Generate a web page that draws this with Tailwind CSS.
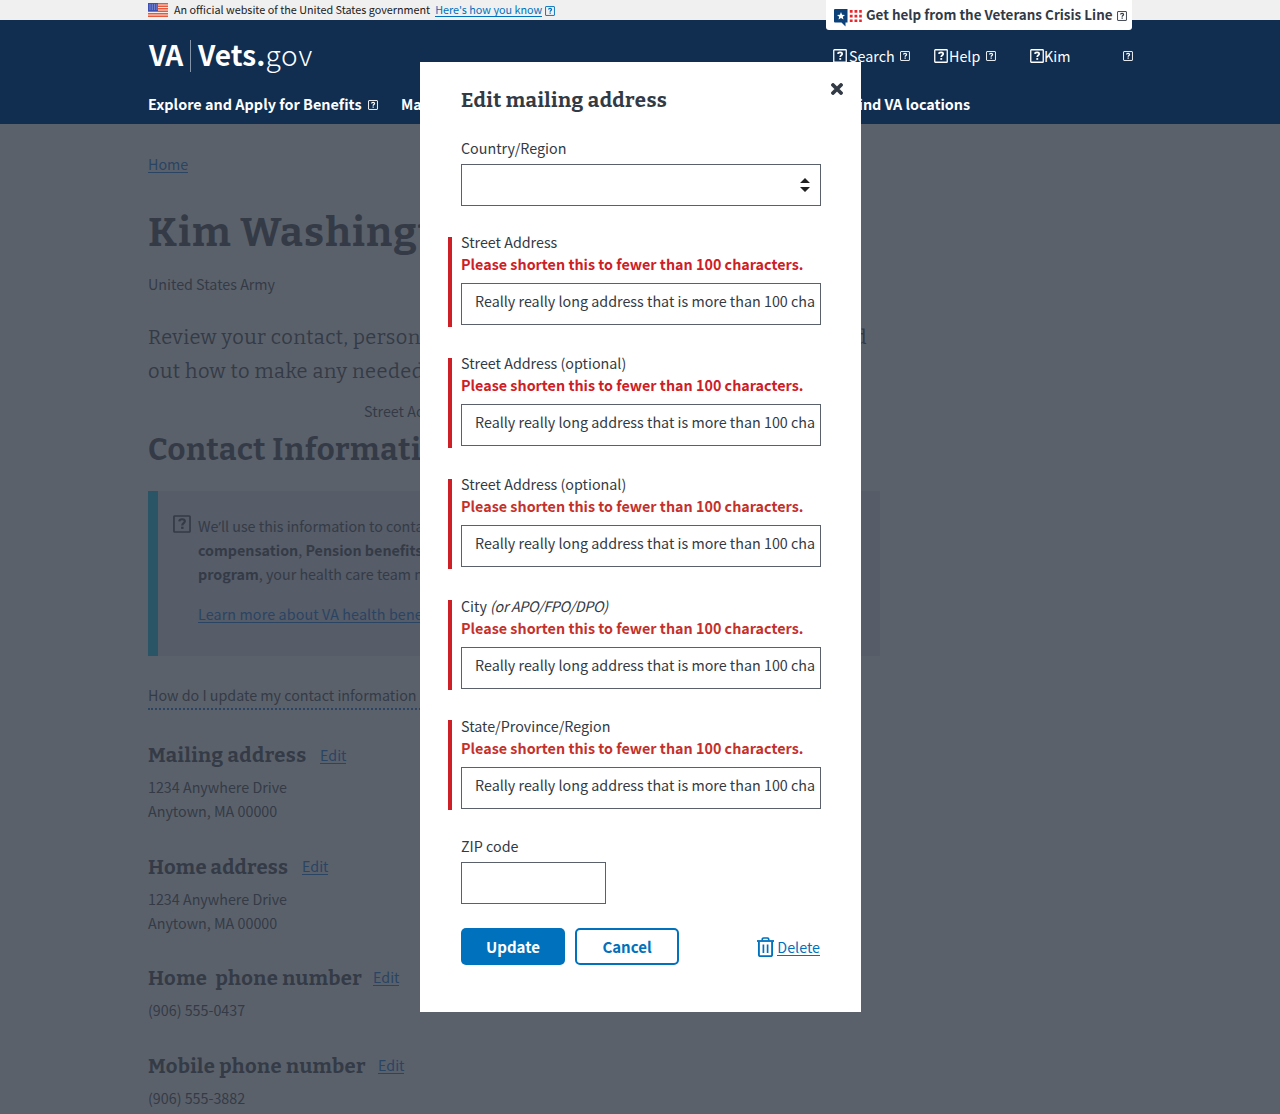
<!DOCTYPE html>
<html lang="en">
<head>
<meta charset="utf-8">
<title>Edit mailing address | Vets.gov</title>
<script src="https://cdn.jsdelivr.net/npm/@tailwindcss/browser@4"></script>
</head>
<body class="relative h-[1114px] overflow-hidden bg-[#5b616b] font-['Noto_Sans_CJK_SC','Open_Sans',sans-serif] text-[14.3px] leading-6 text-[#343b46]">
<svg class="hidden">
  <symbol id="q" viewBox="0 0 14 14"><rect x=".75" y=".75" width="12.5" height="12.5" rx=".6" fill="none" stroke="currentColor" stroke-width="1.3"/><path d="M4.900 4.900C5 3.800 6 3.300 7.100 3.300c1.300 0 2.100.6 2.100 1.600 0 1.400-2 1.400-2 3.200" fill="none" stroke="currentColor" stroke-width="1.700"/><rect x="6.300" y="9.100" width="1.900" height="1.700" fill="currentColor"/></symbol>
</svg>

<!-- Government banner -->
<div class="h-5 bg-[#f0f0f0]">
  <div class="mx-auto flex h-5 w-[984px] items-center text-[10.8px] leading-[18px] text-[#212121]">
    <svg class="mr-1.5 h-3.5 w-5" viewBox="0 0 20 14"><rect width="20" height="14" fill="#fbe9e4"/><path d="M0 .75h20M0 3.250h20M0 5.750h20M0 8.250h20M0 10.750h20M0 13.250h20" stroke="#e35a3e" stroke-width="1.300"/><rect width="10" height="8" fill="#3c50b5"/><path d="M1.500 2h8M1.500 4h8M1.500 6h8" stroke="#c5cbee" stroke-width=".9" stroke-dasharray="1 1.300"/></svg>
    <span class="-mt-0.5">An official website of the United States government</span>
    <a class="-mt-0.5 ml-[5px] h-4 border-b border-[#0071bc] leading-4 text-[#0071bc]">Here's how you know</a>
    <svg class="mt-0.5 ml-[3px] size-[10px] text-[#0071bc]"><use href="#q"/></svg>
  </div>
</div>

<!-- Site header -->
<header class="h-[104px] bg-[#112e51] text-white">
  <div class="mx-auto w-[984px]">
    <div class="flex h-[72px] items-start justify-between pt-5">
      <div class="flex h-8 items-center text-[28px] leading-8">
        <span class="-mt-[5px] ml-px w-[34px] font-bold tracking-[-0.5px]">VA</span>
        <span class="mx-[7px] h-8 w-px bg-[#8494a8]"></span>
        <span class="-mt-[5px] font-bold tracking-[0.05px]">Vets.</span><span class="-mt-[5px] font-light tracking-[0.8px]">gov</span>
      </div>
      <div class="flex h-8 items-center">
        <svg class="mr-0.5 size-3.5"><use href="#q"/></svg><span class="-mt-px w-[46px]">Search</span><svg class="ml-[5px] size-2.5"><use href="#q"/></svg>
        <svg class="mr-px ml-6 size-3.5"><use href="#q"/></svg><span class="-mt-px w-8">Help</span><svg class="ml-[5px] size-2.5"><use href="#q"/></svg>
        <svg class="ml-[34px] size-3.5"><use href="#q"/></svg><span class="-mt-px w-[79px]">Kim</span><svg class="-mr-px size-2.5"><use href="#q"/></svg>
      </div>
    </div>
    <nav class="flex h-6 items-center text-[14.4px] font-bold whitespace-nowrap">
      <span class="w-[214px] tracking-[0.02px]">Explore and Apply for Benefits</span>
      <svg class="mt-0.5 ml-[6px] size-2.5"><use href="#q"/></svg>
      <span class="ml-[23px]">Manage Your Health and Benefits</span>
      <span class="mr-[162px] ml-auto tracking-[-0.05px]"><span class="mr-0.5 tracking-[-0.2px]">F</span>ind VA locations</span>
    </nav>
  </div>
</header>

<!-- Crisis line tab -->
<div class="absolute top-0 left-[826px] flex h-[30px] w-[306px] items-center rounded-b-[3px] bg-white pl-2 text-[13.4px] font-bold text-[#323a45]">
  <svg class="mt-[5px] mr-1 h-[18px] w-7 shrink-0" viewBox="0 0 28 18"><path d="M1 0h12.500v13.500h-2v4l-4-4H1a1 1 0 0 1-1-1V1a1 1 0 0 1 1-1z" fill="#0b4079"/><path d="M7 3l1.100 2.700 2.900.2-2.200 1.900.7 2.800L7 9.100l-2.500 1.500.7-2.800L3 5.900l2.900-.2z" fill="#fff"/><g fill="none" stroke="#e8262c" stroke-width="2.600" stroke-dasharray="2.800 1.900"><path d="M15.800 2.400h12M15.800 7.100h12M15.800 11.800h12"/></g></svg>
  <span class="-mt-0.5 tracking-[0.02px] whitespace-nowrap">Get help from the Veterans Crisis Line</span>
  <svg class="mt-0.5 ml-1 size-2.5 shrink-0"><use href="#q"/></svg>
</div>

<!-- Profile page -->
<main class="mx-auto w-[984px] pt-7 whitespace-nowrap">
  <div class="h-6"><a class="inline-block h-[21px] border-b border-[#2a4463] text-[#2a4463]">Home</a></div>
  <h1 class="mt-[33px] font-['Bitter','DejaVu_Serif_Condensed',serif] text-[40.5px] leading-[48px] font-bold tracking-[1.2px]">Kim Washington</h1>
  <p class="mt-[15px]">United States Army</p>
  <div class="mt-6 w-[719px] font-['Bitter','DejaVu_Serif_Condensed',serif] text-[20px] leading-[34px] tracking-[0.48px]">
    <p class="flex justify-between"><span>Review your contact, personal, and military</span><span>and find</span></p>
    <p>out how to make any needed updates.</p>
  </div>
  <p class="mt-[11px] ml-[216px]">Street Address</p>
  <h2 class="mt-[7px] font-['Bitter','DejaVu_Serif_Condensed',serif] text-[31px] leading-10 font-bold tracking-[0.6px]">Contact Information</h2>
  <section class="mt-[21px] flex h-[165px] w-[732px] border-l-[10px] border-[#2a5567] bg-[#565c68] pt-[23px] pl-[15px]">
    <svg class="mt-px mr-[7px] size-[18px] shrink-0"><use href="#q"/></svg>
    <div>
      <p>We<span class="font-['Open_Sans',sans-serif] leading-none">’</span>ll use this information to contact you about</p>
      <p><b>compensation</b>, <b>Pension benefits</b></p>
      <p><b>program</b>, your health care team may use</p>
      <a class="mt-4 inline-block h-[21px] border-b border-[#2a4463] tracking-[0.12px] text-[#2a4463]">Learn more about VA health benefits</a>
    </div>
  </section>
  <div class="mt-[27px] inline-block border-b-2 border-dotted border-[#2a4463] pb-px leading-6">How do I update my contact information in VA</div>

  <section class="mt-[33px]">
    <div class="flex h-6"><h3 class="w-[172px] font-['Bitter','DejaVu_Serif_Condensed',serif] text-[20.2px] font-bold tracking-[0.45px]">Mailing address</h3><a class="-mt-px h-[22px] border-b border-[#2a4463] pt-px text-[#2a4463]">Edit</a></div>
    <p class="mt-2">1234 Anywhere Drive</p><p>Anytown, MA 00000</p>
  </section>
  <section class="mt-8">
    <div class="flex h-6"><h3 class="w-[154px] font-['Bitter','DejaVu_Serif_Condensed',serif] text-[20.2px] font-bold tracking-[0.25px]">Home address</h3><a class="-mt-px h-[21px] border-b border-[#2a4463] text-[#2a4463]">Edit</a></div>
    <p class="mt-2">1234 Anywhere Drive</p><p>Anytown, MA 00000</p>
  </section>
  <section class="mt-[31px]">
    <div class="flex h-6"><h3 class="w-[225px] font-['Bitter','DejaVu_Serif_Condensed',serif] text-[20.2px] font-bold tracking-[0.4px] whitespace-pre">Home  phone number</h3><a class="-mt-px h-[21px] border-b border-[#2a4463] text-[#2a4463]">Edit</a></div>
    <p class="mt-2">(906) 555-0437</p>
  </section>
  <section class="mt-8">
    <div class="flex h-6"><h3 class="w-[230px] font-['Bitter','DejaVu_Serif_Condensed',serif] text-[20.2px] font-bold tracking-[0.4px]">Mobile phone number</h3><a class="-mt-px h-[21px] border-b border-[#2a4463] text-[#2a4463]">Edit</a></div>
    <p class="mt-2">(906) 555-3882</p>
  </section>
</main>

<!-- Dialog -->
<div role="dialog" class="absolute top-[62px] left-[420px] h-[950px] w-[441px] bg-white pt-[26px] pr-10 pl-[41px] leading-[22px] whitespace-nowrap text-[#323a45]">
  <svg class="absolute top-[21px] right-[18px] size-3" viewBox="0 0 12 12"><path d="M2 2l8 8M10 2l-8 8" stroke="#323a45" stroke-width="3.800" stroke-linecap="round"/></svg>
  <h2 class="font-['Bitter','DejaVu_Serif_Condensed',serif] text-[20.4px] leading-6 font-bold tracking-[0.42px]">Edit mailing address</h2>

  <div class="mt-[25px]">Country/Region</div>
  <div class="mt-[5px] flex h-[42px] items-center justify-end border border-[#5b616b] pr-2.5">
    <svg class="h-3.5 w-2.5" viewBox="0 0 10 14"><path d="M0 5l5-5 5 5zM0 9h10l-5 5z" fill="#212121"/></svg>
  </div>

  <div class="mt-[31px] -ml-[13px] flex h-[90px] flex-col border-l-4 border-[#cd2026] pl-[9px]">
    <div class="-mt-1.5">Street Address</div>
    <div class="font-bold tracking-[0.02px] text-[#cd2026]">Please shorten this to fewer than 100 characters.</div>
    <div class="mt-2 h-[42px] overflow-hidden border border-[#5b616b] pl-[13px] leading-[34px] tracking-[0.01px]">Really really long address that is more than 100 cha</div>
  </div>
  <div class="mt-[31px] -ml-[13px] flex h-[90px] flex-col border-l-4 border-[#cd2026] pl-[9px]">
    <div class="-mt-1.5">Street Address (optional)</div>
    <div class="font-bold tracking-[0.02px] text-[#cd2026]">Please shorten this to fewer than 100 characters.</div>
    <div class="mt-2 h-[42px] overflow-hidden border border-[#5b616b] pl-[13px] leading-[34px] tracking-[0.01px]">Really really long address that is more than 100 cha</div>
  </div>
  <div class="mt-[31px] -ml-[13px] flex h-[90px] flex-col border-l-4 border-[#cd2026] pl-[9px]">
    <div class="-mt-1.5">Street Address (optional)</div>
    <div class="font-bold tracking-[0.02px] text-[#c4312c]">Please shorten this to fewer than 100 characters.</div>
    <div class="mt-2 h-[42px] overflow-hidden border border-[#5b616b] pl-[13px] leading-[34px] tracking-[0.01px]">Really really long address that is more than 100 cha</div>
  </div>
  <div class="mt-[31px] -ml-[13px] flex h-[90px] flex-col border-l-4 border-[#cd2026] pl-[9px]">
    <div class="-mt-[5px]">City <i class="tracking-[-0.35px]">(or APO/FPO/DPO)</i></div>
    <div class="font-bold tracking-[0.02px] text-[#c4312c]">Please shorten this to fewer than 100 characters.</div>
    <div class="mt-2 h-[42px] overflow-hidden border border-[#5b616b] pl-[13px] leading-[34px] tracking-[0.01px]">Really really long address that is more than 100 cha</div>
  </div>
  <div class="mt-[30px] -ml-[13px] flex h-[90px] flex-col border-l-4 border-[#cd2026] pl-[9px]">
    <div class="-mt-[5px]">State/Province/Region</div>
    <div class="font-bold tracking-[0.02px] text-[#c4312c]">Please shorten this to fewer than 100 characters.</div>
    <div class="mt-2 h-[42px] overflow-hidden border border-[#5b616b] pl-[13px] leading-[34px] tracking-[0.01px]">Really really long address that is more than 100 cha</div>
  </div>

  <div class="mt-[25px]">ZIP code</div>
  <div class="mt-[5px] h-[42px] w-[145px] border border-[#5b616b]"></div>

  <div class="mt-6 flex h-[37px] items-center">
    <button class="h-[37px] w-[104px] rounded-[5px] bg-[#0071bc] text-[15px] font-bold text-white">Update</button>
    <button class="ml-2.5 h-[37px] w-[104px] rounded-[5px] border-2 border-[#0071bc] text-[15px] font-bold text-[#0071bc]">Cancel</button>
    <svg class="ml-auto h-5 w-[17px]" viewBox="0 0 17 20" fill="none" stroke="#0071bc"><path d="M0 4h17" stroke-width="1.800"/><path d="M5.300 3.500V2.300Q5.300 1 6.600 1h3.800q1.300 0 1.300 1.300v1.200" stroke-width="1.700"/><path d="M1.900 4.500V18q0 1.100 1.100 1.100h11q1.100 0 1.100-1.100V4.500" stroke-width="1.900"/><path d="M6.400 7.500v8.500M10.600 7.500v8.500" stroke-width="1.700"/></svg>
    <a class="mt-px mr-px ml-[3px] h-[18px] border-b border-[#0071bc] leading-[18px] text-[#0071bc]">Delete</a>
  </div>
</div>
</body>
</html>
